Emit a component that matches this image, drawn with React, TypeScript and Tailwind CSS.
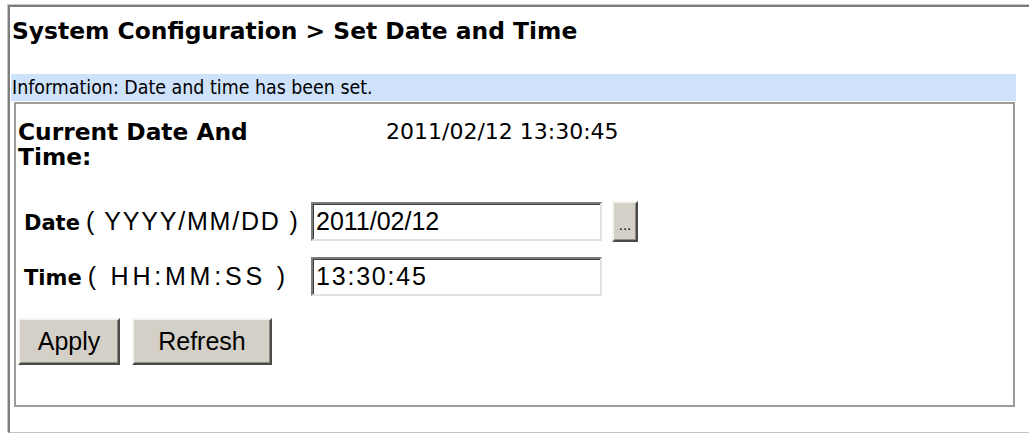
import React from "react";

const verdana = "font-['DejaVu_Sans','Verdana',sans-serif]";
const tahoma = "font-['DejaVu_Sans_Condensed','DejaVu_Sans','Tahoma',sans-serif]";
const msSans = "font-['Liberation_Sans','Arial',sans-serif]";

function Field({ value, className }: { value: string; className: string }) {
  return (
    <input
      readOnly
      value={value}
      className={`${msSans} ${className} block w-[291px] h-[39px] bg-white text-[25px] leading-[30px] text-black pl-[3px] pr-[2px] outline-none border-2 border-t-[#7b7b7b] border-l-[#7b7b7b] border-r-[#e4e2dc] border-b-[#e4e2dc] shadow-[inset_1px_1px_0_#3c3c3c]`}
    />
  );
}

function WinButton({ label, className }: { label: string; className: string }) {
  return (
    <button
      type="button"
      className={`${msSans} ${className} bg-[#d4d0c8] text-black border-2 border-t-[#f4f3ef] border-l-[#f4f3ef] border-r-[#4a4a4a] border-b-[#4a4a4a] shadow-[inset_-1px_-1px_0_#8e8b84] flex items-center justify-center`}
    >
      {label}
    </button>
  );
}

export default function App() {
  return (
    <div className="w-[1029px] h-[435px] overflow-hidden bg-white text-black pt-[5px] pl-[8px]">
      {/* page frame, its right edge runs past the window */}
      <div className="w-[1060px] h-[428px] border-l-2 border-t-2 border-l-[#7e7e7e] border-t-[#7e7e7e] border-b border-b-[#c4c4c4] shadow-[-1px_-1px_0_#c6c6c6] pt-[10px]">
        <h1 className={`${verdana} pl-[2px] text-[23.4px] leading-[28px] font-bold`}>
          System Configuration &gt; Set Date and Time
        </h1>

        <div className={`${tahoma} ml-[1px] mt-[29px] w-[1005px] h-[27px] bg-[#cfe2fc] pl-[1px] text-[19.4px] leading-[27px]`}>
          Information: Date and time has been set.
        </div>

        <div className="ml-[4px] mt-[1px] w-[1001px] h-[305px] border-2 border-[#9c9c9c] pl-[2px] pt-[15px]">
          <div className={`${verdana} flex text-[22px] leading-[25px]`}>
            <div className="w-[368px] shrink-0">
              <div className="w-[260px] font-bold text-[23.3px]">Current Date And Time:</div>
            </div>
            <div>2011/02/12 13:30:45</div>
          </div>

          <div className="mt-[32px] flex flex-col gap-[14px]">
            <div className="flex items-center h-[41px]">
              <div className="w-[293px] shrink-0 pl-[6px] flex items-baseline">
                <span className={`${verdana} text-[21px] font-bold`}>Date</span>
                <span className={`${msSans} text-[25px] tracking-[1.8px] ml-[6px]`}>( YYYY/MM/DD )</span>
              </div>
              <Field value="2011/02/12" className="" />
              <WinButton label="..." className="ml-[10px] w-[26px] h-[41px] text-[15px] pt-[8px]" />
            </div>
            <div className="flex items-center h-[41px]">
              <div className="w-[293px] shrink-0 pl-[6px] flex items-baseline">
                <span className={`${verdana} text-[21px] font-bold`}>Time</span>
                <span className={`${msSans} text-[25px] tracking-[3.8px] ml-[6px]`}>( HH:MM:SS )</span>
              </div>
              <Field value="13:30:45" className="tracking-[1.8px]" />
            </div>
          </div>

          <div className="mt-[21px] flex gap-[12px]">
            <WinButton label="Apply" className="w-[102px] h-[47px] text-[25px]" />
            <WinButton label="Refresh" className="w-[140px] h-[47px] text-[25px]" />
          </div>
        </div>
      </div>
    </div>
  );
}
